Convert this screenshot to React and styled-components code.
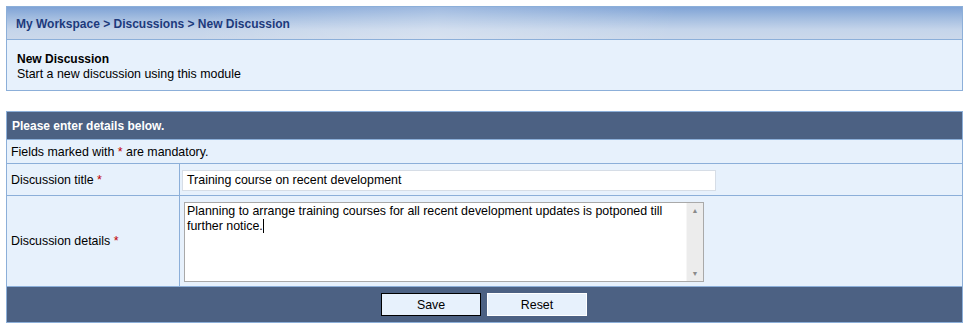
import styled, { createGlobalStyle } from "styled-components";

const GlobalStyle = createGlobalStyle`
  body {
    margin: 0;
    padding: 6px 8px 0 6px;
    background: #ffffff;
    font-family: "Liberation Sans", Arial, sans-serif;
    font-size: 12.4px;
    color: #000;
  }
`;

const App = () => {
  return (
    <>
      <GlobalStyle />
      <Page>
        <Panel>
          <Crumbs>
            <CrumbText>My Workspace &gt; Discussions &gt; New Discussion</CrumbText>
          </Crumbs>
          <Intro>
            <IntroTitle>New Discussion</IntroTitle>
            <div>Start a new discussion using this module</div>
          </Intro>
        </Panel>

        <Form>
          <FormHead>Please enter details below.</FormHead>
          <Note>
            <span>
              Fields marked with <Req>*</Req> are mandatory.
            </span>
          </Note>
          <Row $height={32}>
            <Label>
              <span>
                Discussion title <Req>*</Req>
              </span>
            </Label>
            <Field>
              <TextInput>Training course on recent development</TextInput>
            </Field>
          </Row>
          <Row $height={91}>
            <Label>
              <span>
                Discussion details <Req>*</Req>
              </span>
            </Label>
            <Field $top>
              <AreaBox>
                <AreaText>
                  Planning to arrange training courses for all recent development updates is potponed till
                  further notice.
                  <Caret />
                </AreaText>
                <Scroll>
                  <Arrow>▲</Arrow>
                  <Arrow>▼</Arrow>
                </Scroll>
              </AreaBox>
            </Field>
          </Row>
          <Footer>
            <Button $focused>Save</Button>
            <Button>Reset</Button>
          </Footer>
        </Form>
      </Page>
    </>
  );
};

export default App;

const Page = styled.div`
  width: 957px;
  display: flex;
  flex-direction: column;
  gap: 20px;
`;

const Panel = styled.div`
  border: 1px solid #8cafd9;
  background: #e7f1fc;
`;

const Crumbs = styled.div`
  height: 32px;
  display: flex;
  align-items: center;
  padding-left: 9px;
  border-bottom: 1px solid #8cafd9;
  background:
    linear-gradient(100deg, rgba(255, 255, 255, 0) 20%, rgba(255, 255, 255, 0.25) 45%, rgba(255, 255, 255, 0) 70%),
    linear-gradient(180deg, #7fa3d6 0%, #a3bde0 35%, #c4d4ea 70%, #cbd8ea 100%);
`;

const CrumbText = styled.span`
  font-weight: bold;
  font-size: 12px;
  color: #1d3a7c;
  margin-top: 1px;
`;

const Intro = styled.div`
  height: 50px;
  padding: 12px 10px 0;
  box-sizing: border-box;
  line-height: 15px;
`;

const IntroTitle = styled.div`
  font-weight: bold;
  font-size: 12px;
`;

const Form = styled.div`
  border: 1px solid #8cafd9;
  background: #e7f1fc;
`;

const FormHead = styled.div`
  height: 27px;
  display: flex;
  align-items: center;
  padding-left: 5px;
  background: #4c6183;
  color: #ffffff;
  font-weight: bold;
  font-size: 12px;
  border-bottom: 1px solid #8cafd9;
`;

const Note = styled.div`
  height: 23px;
  display: flex;
  align-items: center;
  padding-left: 4px;
  border-bottom: 1px solid #8cafd9;
`;

const Req = styled.span`
  color: #c00000;
`;

const Row = styled.div`
  height: ${(p) => p.$height - 1}px;
  display: grid;
  grid-template-columns: 173px 1fr;
  border-bottom: 1px solid #8cafd9;
`;

const Label = styled.div`
  display: flex;
  align-items: center;
  padding-left: 4px;
  border-right: 1px solid #8cafd9;
`;

const Field = styled.div`
  display: flex;
  align-items: ${(p) => (p.$top ? "flex-start" : "center")};
  padding: ${(p) => (p.$top ? "6px 0 0 4px" : "0 0 0 2px")};
`;

const TextInput = styled.div`
  width: 534px;
  height: 21px;
  box-sizing: border-box;
  background: #ffffff;
  border: 1px solid #d6dde6;
  display: flex;
  align-items: center;
  padding-left: 4px;
  margin-top: 1px;
`;

const AreaBox = styled.div`
  width: 520px;
  height: 80px;
  box-sizing: border-box;
  border: 1px solid #a9a9a9;
  background: #ffffff;
  display: flex;
`;

const AreaText = styled.div`
  flex: 1;
  padding: 1px 2px;
  line-height: 15px;
`;

const Caret = styled.span`
  display: inline-block;
  width: 1px;
  height: 14px;
  background: #000;
  vertical-align: -3px;
`;

const Scroll = styled.div`
  width: 16px;
  background: #ececec;
  border-left: 1px solid #f6f6f6;
  display: flex;
  flex-direction: column;
  justify-content: space-between;
  align-items: center;
  padding: 4px 0 3px;
`;

const Arrow = styled.span`
  font-size: 7px;
  color: #8a8a8a;
  line-height: 8px;
`;

const Footer = styled.div`
  height: 35px;
  background: #4c6183;
  display: flex;
  justify-content: center;
  align-items: center;
  gap: 6px;
  padding-right: 1px;
`;

const Button = styled.div`
  width: 100px;
  height: 23px;
  box-sizing: border-box;
  background: #e7f1fc;
  border: 1px solid ${(p) => (p.$focused ? "#000000" : "#ffffff")};
  display: flex;
  align-items: center;
  justify-content: center;
`;
